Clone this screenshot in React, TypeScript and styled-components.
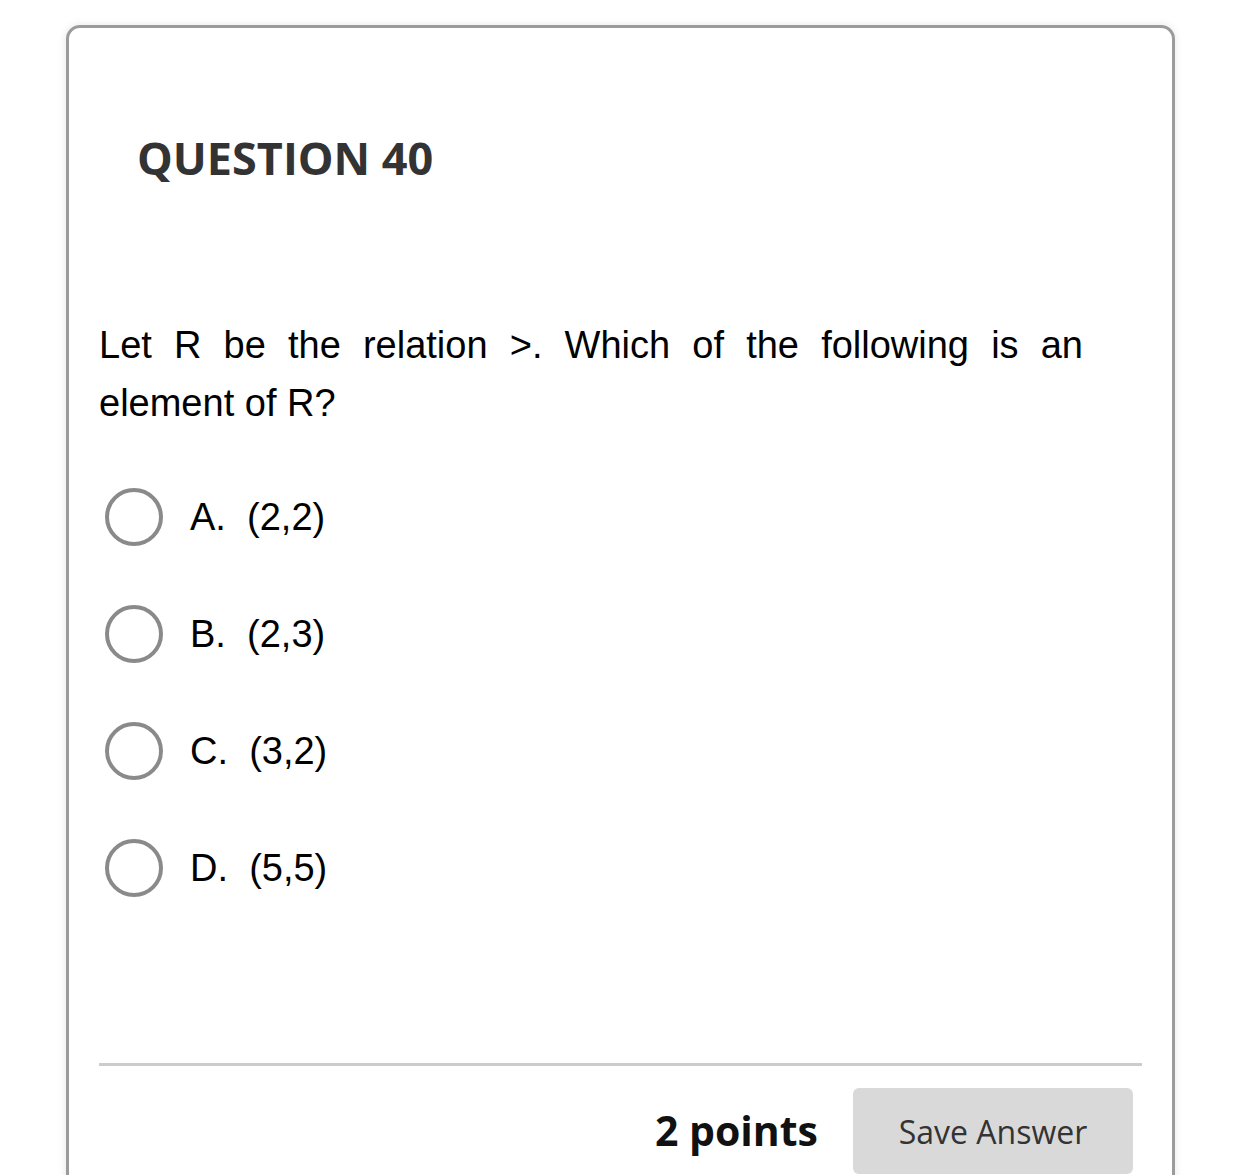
import styled, { createGlobalStyle } from "styled-components";

const GlobalStyle = createGlobalStyle`
   html, body {
      margin: 0;
      padding: 0;
      background: #ffffff;
   }
   * {
      box-sizing: border-box;
   }
`;

const Page = styled.div`
   width: 1242px;
   height: 1175px;
   overflow: hidden;
   padding: 25px 0 0 66px;
`;

const Card = styled.section`
   width: 1109px;
   min-height: 1200px;
   border: 3px solid #9b9b9b;
   border-radius: 14px;
   box-shadow: 0 0 9px rgba(0, 0, 0, 0.1);
   padding: 103px 30px 0 30px;
   display: flex;
   flex-direction: column;
`;

const Heading = styled.h2`
   margin: 0 0 131px 38px;
   font-family: "Open Sans", sans-serif;
   font-weight: 700;
   font-size: 45px;
   line-height: 54px;
   color: #333333;
`;

const Prompt = styled.p`
   margin: 0;
   width: 984px;
   font-family: "Liberation Sans", Arial, sans-serif;
   font-size: 38px;
   line-height: 58px;
   text-align: justify;
   color: #000000;
`;

const Options = styled.div`
   display: flex;
   flex-direction: column;
   gap: 59px;
   margin-top: 56px;
`;

const Option = styled.label`
   display: flex;
   align-items: center;
   gap: 27px;
   height: 58px;
   padding-left: 6px;
   font-family: "Liberation Sans", Arial, sans-serif;
   font-size: 38px;
   color: #000000;
   cursor: pointer;
`;

const Radio = styled.span`
   width: 58px;
   height: 58px;
   border-radius: 50%;
   border: 4px solid #8a8a8a;
   background: #ffffff;
   flex-shrink: 0;
`;

const Divider = styled.hr`
   margin: 166px 0 0 0;
   border: none;
   height: 3px;
   background: #cccccc;
`;

const Footer = styled.div`
   display: flex;
   justify-content: flex-end;
   align-items: center;
   gap: 35px;
   padding: 22px 9px 0 0;
`;

const Points = styled.span`
   font-family: "Open Sans", sans-serif;
   font-weight: 700;
   font-size: 41px;
   color: #111111;
   margin-top: -3px;
`;

const SaveButton = styled.button`
   width: 280px;
   height: 86px;
   border: none;
   border-radius: 6px;
   background: #d9d9d9;
   font-family: "Open Sans", sans-serif;
   font-size: 32px;
   color: #333333;
   cursor: pointer;
`;

const choices = [
   { key: "A", value: "(2,2)" },
   { key: "B", value: "(2,3)" },
   { key: "C", value: "(3,2)" },
   { key: "D", value: "(5,5)" },
];

function App() {
   return (
      <>
         <GlobalStyle />
         <Page>
            <Card>
               <Heading>QUESTION 40</Heading>
               <Prompt>
                  Let R be the relation &gt;. Which of the following is an
                  element of R?
               </Prompt>
               <Options>
                  {choices.map((c) => (
                     <Option key={c.key}>
                        <Radio />
                        <span>
                           {c.key}.&nbsp; {c.value}
                        </span>
                     </Option>
                  ))}
               </Options>
               <Divider />
               <Footer>
                  <Points>2 points</Points>
                  <SaveButton>Save Answer</SaveButton>
               </Footer>
            </Card>
         </Page>
      </>
   );
}

export default App;
